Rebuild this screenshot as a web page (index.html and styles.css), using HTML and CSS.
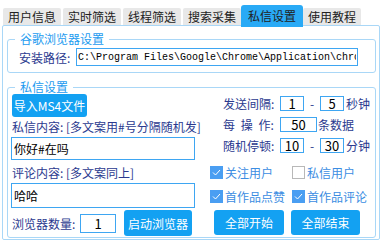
FILE: index.html
```html
<!DOCTYPE html>
<html lang="zh-CN">
<head>
  <meta charset="UTF-8">
  <title>私信设置</title>
  <link rel="stylesheet" href="styles.css">
</head>
<body>

<!-- Tab strip -->
<div class="tabs">
  <div class="tab">用户信息</div>
  <div class="tab">实时筛选</div>
  <div class="tab">线程筛选</div>
  <div class="tab">搜索采集</div>
  <div class="tab active">私信设置</div>
  <div class="tab">使用教程</div>
</div>

<div class="pane">

  <!-- Chrome path -->
  <fieldset class="group group-browser">
    <legend>谷歌浏览器设置</legend>
    <div class="path-row">
      <label class="lbl path-lbl">安装路径:</label>
      <input class="path" type="text" value="C:\Program Files\Google\Chrome\Application\chrome.exe">
    </div>
  </fieldset>

  <!-- Message settings -->
  <fieldset class="group group-msg">
    <legend>私信设置</legend>
    <div class="cols">

      <div class="left">
        <button class="btn btn-import">导入MS4文件</button>
        <div class="lbl hint">私信内容: [多文案用#号分隔随机发]</div>
        <input class="text text-msg" type="text" value="你好#在吗">
        <div class="lbl hint hint-comment">评论内容: [多文案同上]</div>
        <input class="text text-comment" type="text" value="哈哈">
        <div class="browser-row">
          <label class="lbl">浏览器数量:</label>
          <input class="num num-browser" type="text" value="1">
          <button class="btn btn-launch">启动浏览器</button>
        </div>
      </div>

      <div class="right">
        <div class="set-row">
          <label class="lbl set-lbl">发送间隔:</label>
          <input class="num num-s" type="text" value="1">
          <span class="dash">-</span>
          <input class="num num-s" type="text" value="5">
          <span class="lbl unit">秒钟</span>
        </div>
        <div class="set-row">
          <label class="lbl set-lbl spaced">每 操 作:</label>
          <input class="num num-m" type="text" value="50">
          <span class="lbl unit">条数据</span>
        </div>
        <div class="set-row">
          <label class="lbl set-lbl">随机停顿:</label>
          <input class="num num-s" type="text" value="10">
          <span class="dash">-</span>
          <input class="num num-s" type="text" value="30">
          <span class="lbl unit">分钟</span>
        </div>

        <div class="check-row first">
          <label class="chk"><span class="box on"><svg width="13" height="13" viewBox="0 0 13 13"><polyline points="3,6.5 5.5,9 10,4" fill="none" stroke="#fff" stroke-width="1"/></svg></span>关注用户</label>
          <label class="chk"><span class="box"></span>私信用户</label>
        </div>
        <div class="check-row">
          <label class="chk"><span class="box on"><svg width="13" height="13" viewBox="0 0 13 13"><polyline points="3,6.5 5.5,9 10,4" fill="none" stroke="#fff" stroke-width="1"/></svg></span>首作品点赞</label>
          <label class="chk"><span class="box on"><svg width="13" height="13" viewBox="0 0 13 13"><polyline points="3,6.5 5.5,9 10,4" fill="none" stroke="#fff" stroke-width="1"/></svg></span>首作品评论</label>
        </div>

        <div class="actions">
          <button class="btn btn-start">全部开始</button>
          <button class="btn btn-stop">全部结束</button>
        </div>
      </div>

    </div>
  </fieldset>

</div>

</body>
</html>
```

FILE: styles.css
```css
* { box-sizing: border-box; }

body {
  margin: 0;
  font-family: "Noto Sans CJK SC", "Noto Sans", sans-serif;
  font-size: 12px;
  color: #222;
  background: #fff;
}

/* Tabs */
.tabs {
  display: flex;
  align-items: flex-end;
  height: 25px;
  padding-left: 3px;
  position: relative;
  z-index: 1;
}

.tab {
  width: 58px;
  height: 17px;
  line-height: 17px;
  margin-right: 2px;
  background: #e8e8e8;
  border-radius: 2px 2px 0 0;
  text-align: center;
  white-space: nowrap;
}

.tab.active {
  width: 62px;
  height: 22px;
  line-height: 22px;
  margin-left: -2px;
  margin-right: 0;
  margin-bottom: -2px;
  background: #29aaf6;
  border-radius: 3px 3px 0 0;
}

/* Page body under the tabs */
.pane {
  margin-left: 2px;
  width: 378px;
  height: 215px;
  border: 1px solid #a9d7f7;
  border-radius: 2px;
  padding: 6px 3px 0 4px;
}

.group {
  margin: 0;
  min-width: 0;
  border: 1px solid #a9d7f7;
  border-radius: 3px;
}

.group legend {
  padding: 0 5px;
  line-height: 14px;
  color: #1c9bf0;
}

.group-browser {
  padding: 2px 16px 6px 11px;
}

.group-browser legend {
  margin-left: -4px;
}

.group-msg {
  margin-top: 7px;
  padding: 0 0 1px 3px;
}

.group-msg legend {
  margin-left: 4px;
}

.lbl {
  color: #2b3a8f;
  white-space: nowrap;
}

input {
  font-family: inherit;
  font-size: 12px;
  color: #000;
  border: 1px solid #3ea6f2;
  background: #fff;
  outline: none;
  margin: 0;
}

.btn {
  border: none;
  border-radius: 3px;
  background: #13a1f2;
  color: #fff;
  font-family: inherit;
  font-size: 12px;
  padding: 0;
  cursor: pointer;
}

/* Install path */
.path-row {
  display: flex;
  align-items: center;
}

.path-lbl {
  width: 57px;
}

.path {
  width: 282px;
  height: 18px;
  padding: 0 1px;
  font-family: "Liberation Mono", monospace;
  font-size: 10px;
}

/* Two columns */
.cols {
  display: flex;
}

.left {
  width: 184px;
  display: flex;
  flex-direction: column;
  align-items: flex-start;
}

.btn-import {
  width: 75px;
  height: 23px;
  margin-left: 1px;
}

.hint {
  margin-top: 3px;
  line-height: 14px;
  margin-left: 1px;
}

.hint-comment {
  margin-top: 6px;
}

.text {
  width: 184px;
  padding: 0 2px;
}

.text-msg {
  margin-top: 3px;
  height: 23px;
}

.text-comment {
  margin-top: 3px;
  height: 25px;
}

.browser-row {
  display: flex;
  align-items: center;
  margin-top: 2px;
  height: 26px;
}

.browser-row .lbl {
  margin-left: 1px;
  width: 68px;
}

.num {
  text-align: center;
  padding: 0;
  font-size: 13px;
}

.num-browser {
  width: 36px;
  height: 19px;
}

.btn-launch {
  width: 68px;
  height: 26px;
  margin-left: 8px;
}

/* Right settings column */
.right {
  flex: 1;
  margin-left: 15px;
}

.set-row {
  display: flex;
  align-items: center;
  height: 15px;
  margin-top: 6px;
}

.set-row:first-child {
  margin-top: 2px;
}

.set-lbl {
  margin-left: 13px;
  width: 57px;
}

.spaced {
  word-spacing: 3px;
}

.num-s {
  width: 24px;
  height: 15px;
}

.num-m {
  width: 37px;
  height: 15px;
}

.dash {
  width: 16px;
  text-align: center;
  color: #2b3a8f;
}

.unit {
  margin-left: 2px;
}

.num-m + .unit {
  margin-left: 1px;
}

.check-row {
  display: flex;
  align-items: center;
  height: 16px;
  margin-top: 8px;
}

.check-row.first {
  margin-top: 11px;
}

.chk {
  display: flex;
  align-items: center;
  width: 82px;
  color: #3b8de2;
  white-space: nowrap;
}

.box {
  width: 13px;
  height: 13px;
  margin-right: 2px;
  border: 1px solid #b8b8b8;
  background: #fff;
  display: flex;
}

.box.on {
  border: none;
  background: #4a9ef2;
}

.actions {
  display: flex;
  margin-top: 6px;
}

.btn-start {
  width: 70px;
  height: 25px;
  margin-left: 4px;
}

.btn-stop {
  width: 69px;
  height: 25px;
  margin-left: 7px;
}
```
